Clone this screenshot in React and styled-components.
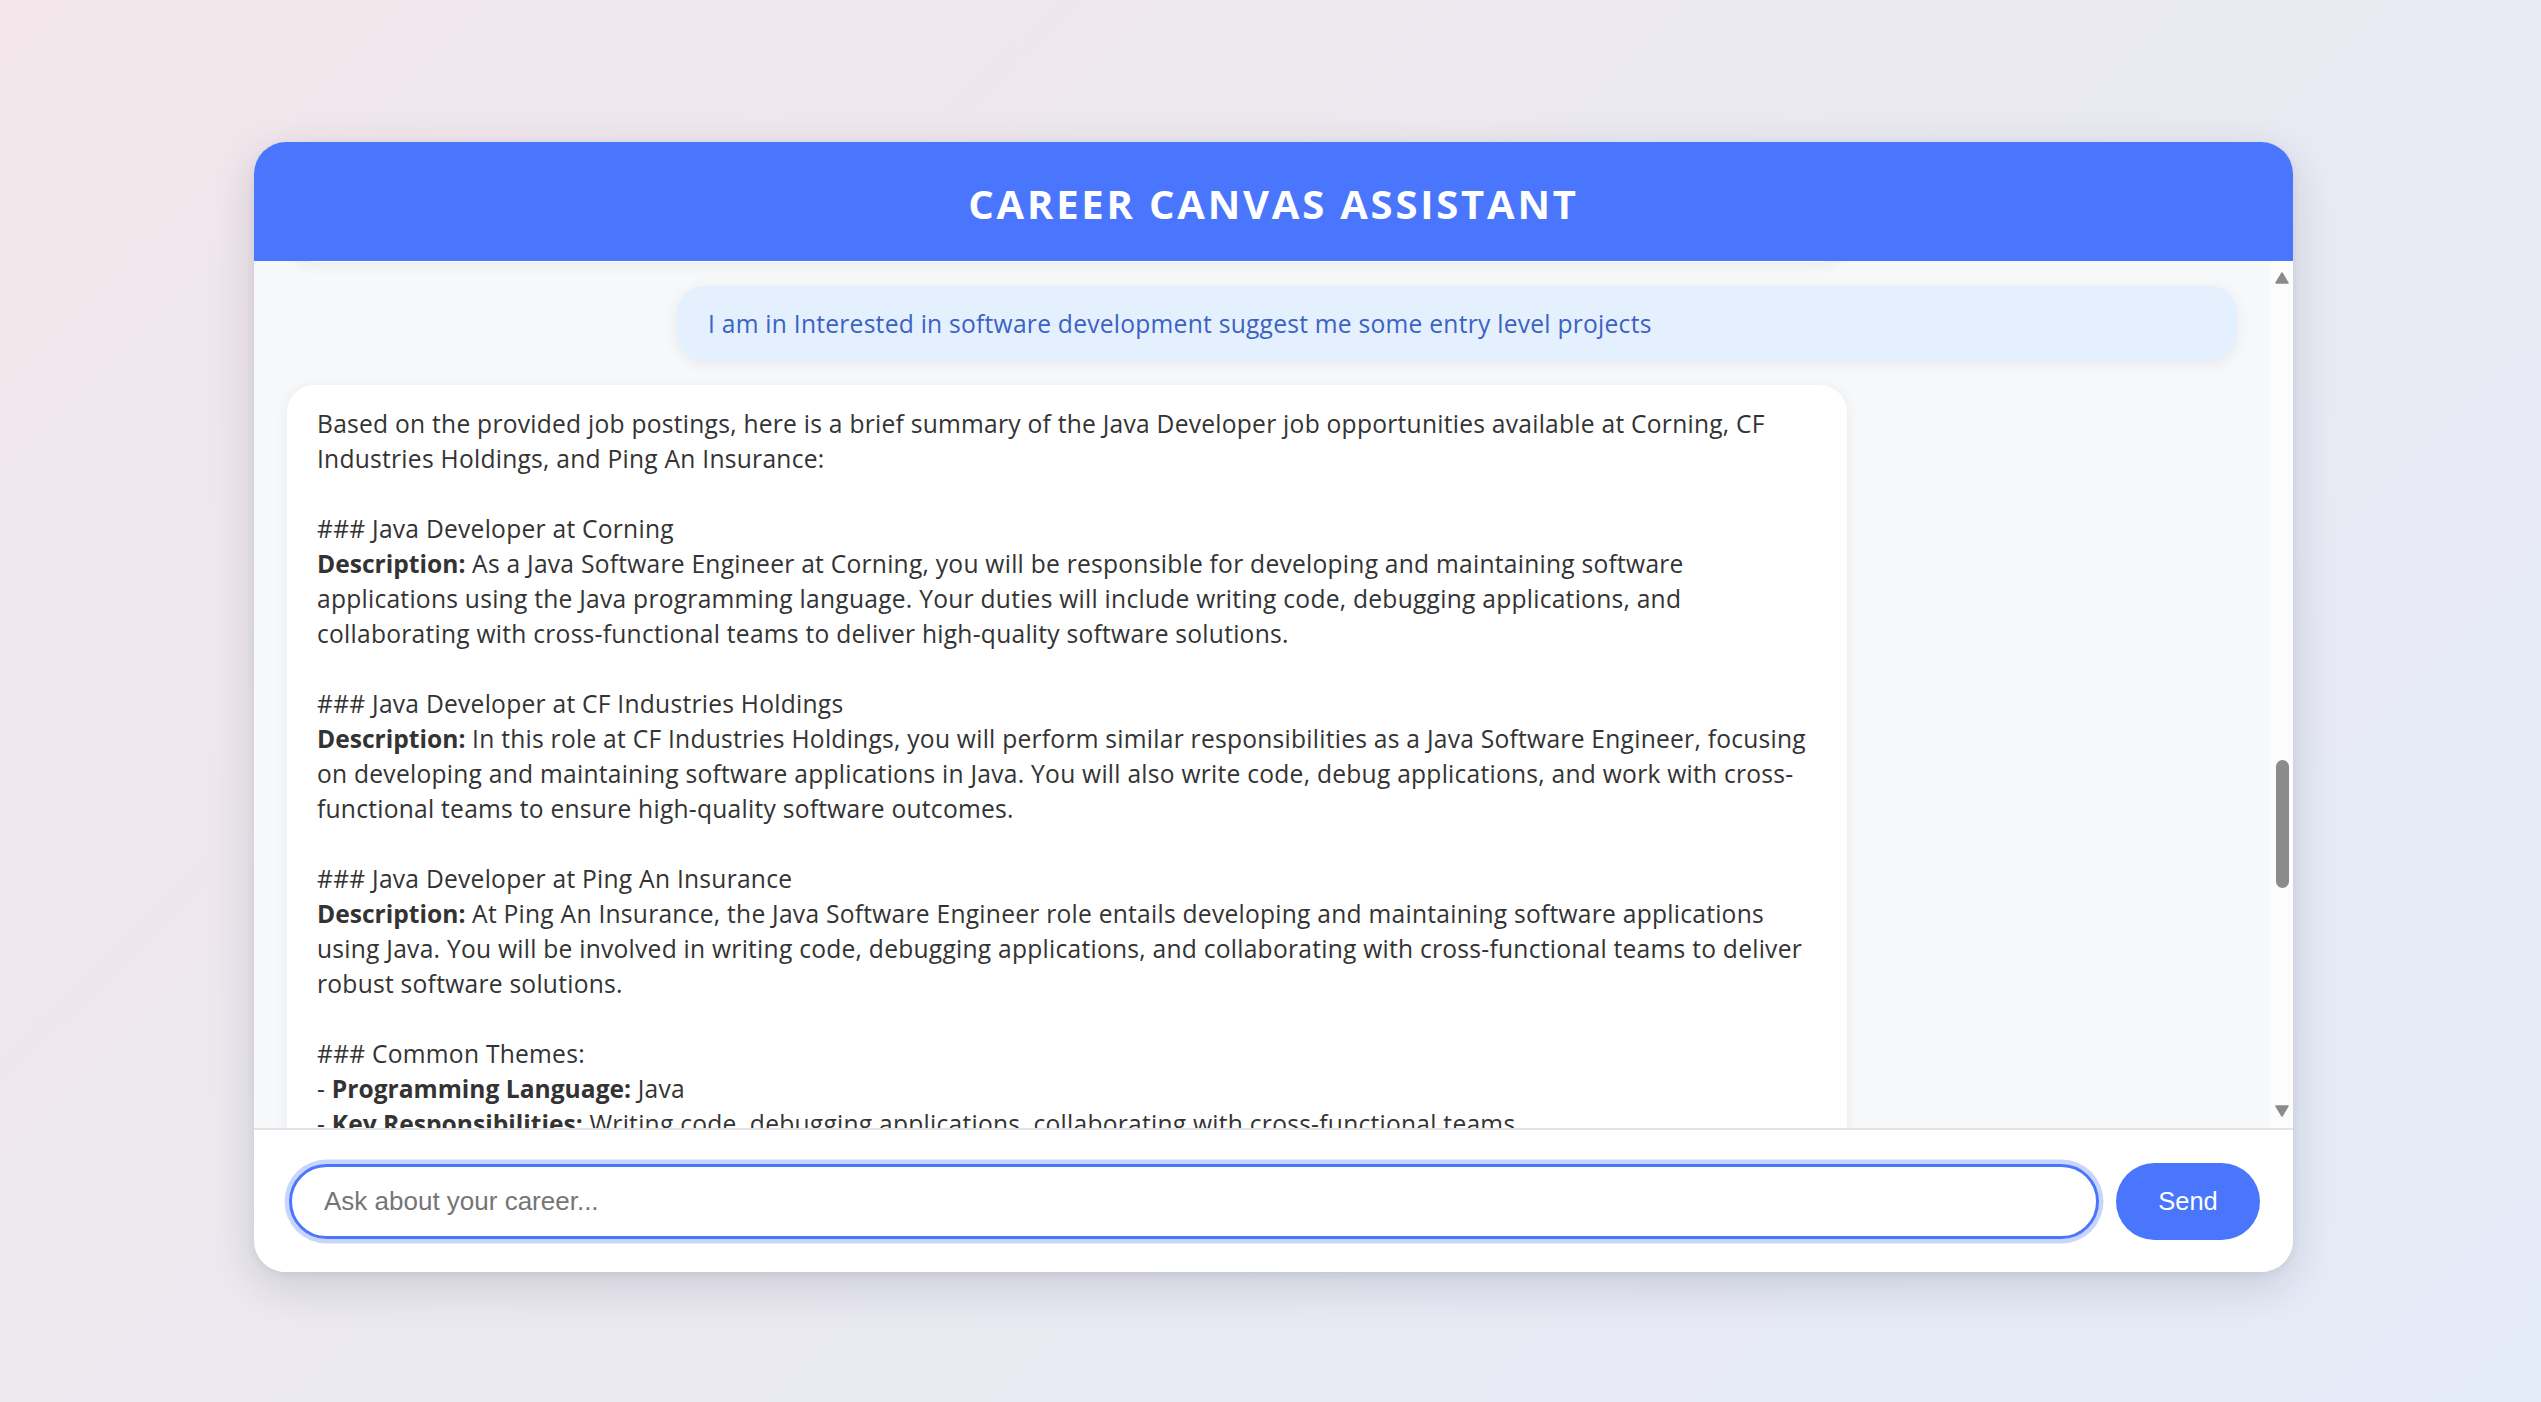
import React, { useLayoutEffect, useRef } from "react";
import styled, { createGlobalStyle } from "styled-components";

const Global = createGlobalStyle`
  html, body { margin: 0; padding: 0; }
  body {
    min-height: 100vh;
    background: linear-gradient(135deg, #f2e6ea 0%, #ebe9f0 45%, #e4ebf8 100%);
    font-family: "Open Sans", "Noto Sans", sans-serif;
  }
  #root { min-height: 100vh; }
`;

const Page = styled.div`
  min-height: 100vh;
  display: flex;
  justify-content: center;
  align-items: flex-start;
  padding-top: 142px;
  padding-left: 6px;
  box-sizing: border-box;
`;

const Card = styled.div`
  width: 2039px;
  height: 1130px;
  background: #ffffff;
  border-radius: 32px;
  overflow: hidden;
  display: flex;
  flex-direction: column;
  box-shadow: 0 14px 44px rgba(40, 44, 70, 0.16), 0 2px 8px rgba(40, 44, 70, 0.06);
`;

const Header = styled.header`
  height: 119px;
  flex: none;
  background: #4a76fd;
  display: flex;
  align-items: center;
  justify-content: center;
`;

const Title = styled.h1`
  margin: 0;
  color: #ffffff;
  font-family: "Open Sans", sans-serif;
  font-weight: 700;
  font-size: 40px;
  letter-spacing: 2.8px;
  padding-top: 3px;
`;

const Body = styled.div`
  flex: 1;
  min-height: 0;
  display: flex;
  background: #f7f8fa;
`;

const Viewport = styled.div`
  flex: 1;
  min-width: 0;
  position: relative;
  overflow: hidden;
`;

const Thread = styled.div`
  display: flex;
  flex-direction: column;
  gap: 24px;
  padding: 0 33px 40px;
`;

const Bubble = styled.div`
  width: 80%;
  box-sizing: border-box;
  border-radius: 27px;
  font-size: 24.6px;
  letter-spacing: 0.25px;
  line-height: 35px;
  align-self: ${(p) => (p.$mine ? "flex-end" : "flex-start")};
  background: ${(p) => (p.$mine ? "#e4f0fd" : "#ffffff")};
  color: ${(p) => (p.$mine ? "#3b62c4" : "#333333")};
  padding: ${(p) => (p.$mine ? "20px 31px" : "21px 30px 22px")};
  box-shadow: 0 3px 14px rgba(30, 40, 60, 0.07);
  white-space: pre-wrap;
`;

const Stub = styled(Bubble)`
  height: 320px;
`;

const Strong = styled.strong`
  font-weight: 700;
  letter-spacing: 0;
`;

const Rail = styled.div`
  width: 23px;
  flex: none;
  background: #fcfcfc;
  display: flex;
  flex-direction: column;
  align-items: center;
`;

const RailButton = styled.div`
  height: 34px;
  flex: none;
  display: flex;
  align-items: center;
  justify-content: center;
  width: 100%;
`;

const Track = styled.div`
  flex: 1;
  width: 100%;
  display: flex;
  flex-direction: column;
  align-items: center;
`;

const Thumb = styled.div`
  width: 13px;
  height: 128px;
  border-radius: 7px;
  background: #8b8b8b;
  margin-top: ${(p) => p.$offset}px;
  margin-left: 1px;
`;

const Composer = styled.div`
  flex: none;
  border-top: 2px solid #e2e3e6;
  background: #ffffff;
  display: flex;
  align-items: center;
  gap: 17px;
  padding: 33px 33px 32px 35px;
`;

const Input = styled.input`
  flex: 1;
  min-width: 0;
  height: 75px;
  box-sizing: border-box;
  border: 3px solid #4a76fd;
  border-radius: 999px;
  outline: none;
  box-shadow: 0 0 0 4.5px rgba(74, 118, 253, 0.3);
  padding: 0 30px 0 32px;
  font-family: "Liberation Sans", Arial, sans-serif;
  font-size: 26px;
  color: #222;
  caret-color: #111;
  &::placeholder { color: #757575; }
`;

const SendButton = styled.button`
  width: 144px;
  height: 77px;
  flex: none;
  border: none;
  border-radius: 999px;
  background: #4a76fd;
  color: #ffffff;
  font-family: "Liberation Sans", Arial, sans-serif;
  font-size: 25.5px;
  cursor: pointer;
`;

const Arrow = ({ up }) => (
  <svg width="14" height="12" viewBox="0 0 14 12">
    <path
      d={up ? "M7 1 L13 11 L1 11 Z" : "M1 1 L13 1 L7 11 Z"}
      fill="#8b8b8b"
      stroke="#8b8b8b"
      strokeWidth="1.5"
      strokeLinejoin="round"
    />
  </svg>
);

const answer = [
  "Based on the provided job postings, here is a brief summary of the Java Developer job opportunities available at Corning, CF Industries Holdings, and Ping An Insurance:\n\n### Java Developer at Corning\n",
  <Strong key="d1">Description:</Strong>,
  " As a Java Software Engineer at Corning, you will be responsible for developing and maintaining software applications using the Java programming language. Your duties will include writing code, debugging applications, and collaborating with cross-functional teams to deliver high-quality software solutions.\n\n### Java Developer at CF Industries Holdings\n",
  <Strong key="d2">Description:</Strong>,
  " In this role at CF Industries Holdings, you will perform similar responsibilities as a Java Software Engineer, focusing on developing and maintaining software applications in Java. You will also write code, debug applications, and work with cross-functional teams to ensure high-quality software outcomes.\n\n### Java Developer at Ping An Insurance\n",
  <Strong key="d3">Description:</Strong>,
  " At Ping An Insurance, the Java Software Engineer role entails developing and maintaining software applications using Java. You will be involved in writing code, debugging applications, and collaborating with cross-functional teams to deliver robust software solutions.\n\n### Common Themes:\n- ",
  <Strong key="p1">Programming Language:</Strong>,
  " Java\n- ",
  <Strong key="p2">Key Responsibilities:</Strong>,
  " Writing code, debugging applications, collaborating with cross-functional teams.",
];

export default function App() {
  const viewportRef = useRef(null);
  const mineRef = useRef(null);

  useLayoutEffect(() => {
    if (viewportRef.current && mineRef.current) {
      viewportRef.current.scrollTop = mineRef.current.offsetTop - 25;
    }
  }, []);

  return (
    <>
      <Global />
      <Page>
        <Card>
          <Header>
            <Title>CAREER CANVAS ASSISTANT</Title>
          </Header>
          <Body>
            <Viewport ref={viewportRef}>
              <Thread>
                <Stub aria-hidden="true" />
                <Bubble $mine ref={mineRef}>
                  I am in Interested in software development suggest me some entry level projects
                </Bubble>
                <Bubble>{answer}</Bubble>
              </Thread>
            </Viewport>
            <Rail>
              <RailButton>
                <Arrow up />
              </RailButton>
              <Track>
                <Thumb $offset={465} />
              </Track>
              <RailButton>
                <Arrow />
              </RailButton>
            </Rail>
          </Body>
          <Composer>
            <Input placeholder="Ask about your career..." autoFocus />
            <SendButton>Send</SendButton>
          </Composer>
        </Card>
      </Page>
    </>
  );
}
